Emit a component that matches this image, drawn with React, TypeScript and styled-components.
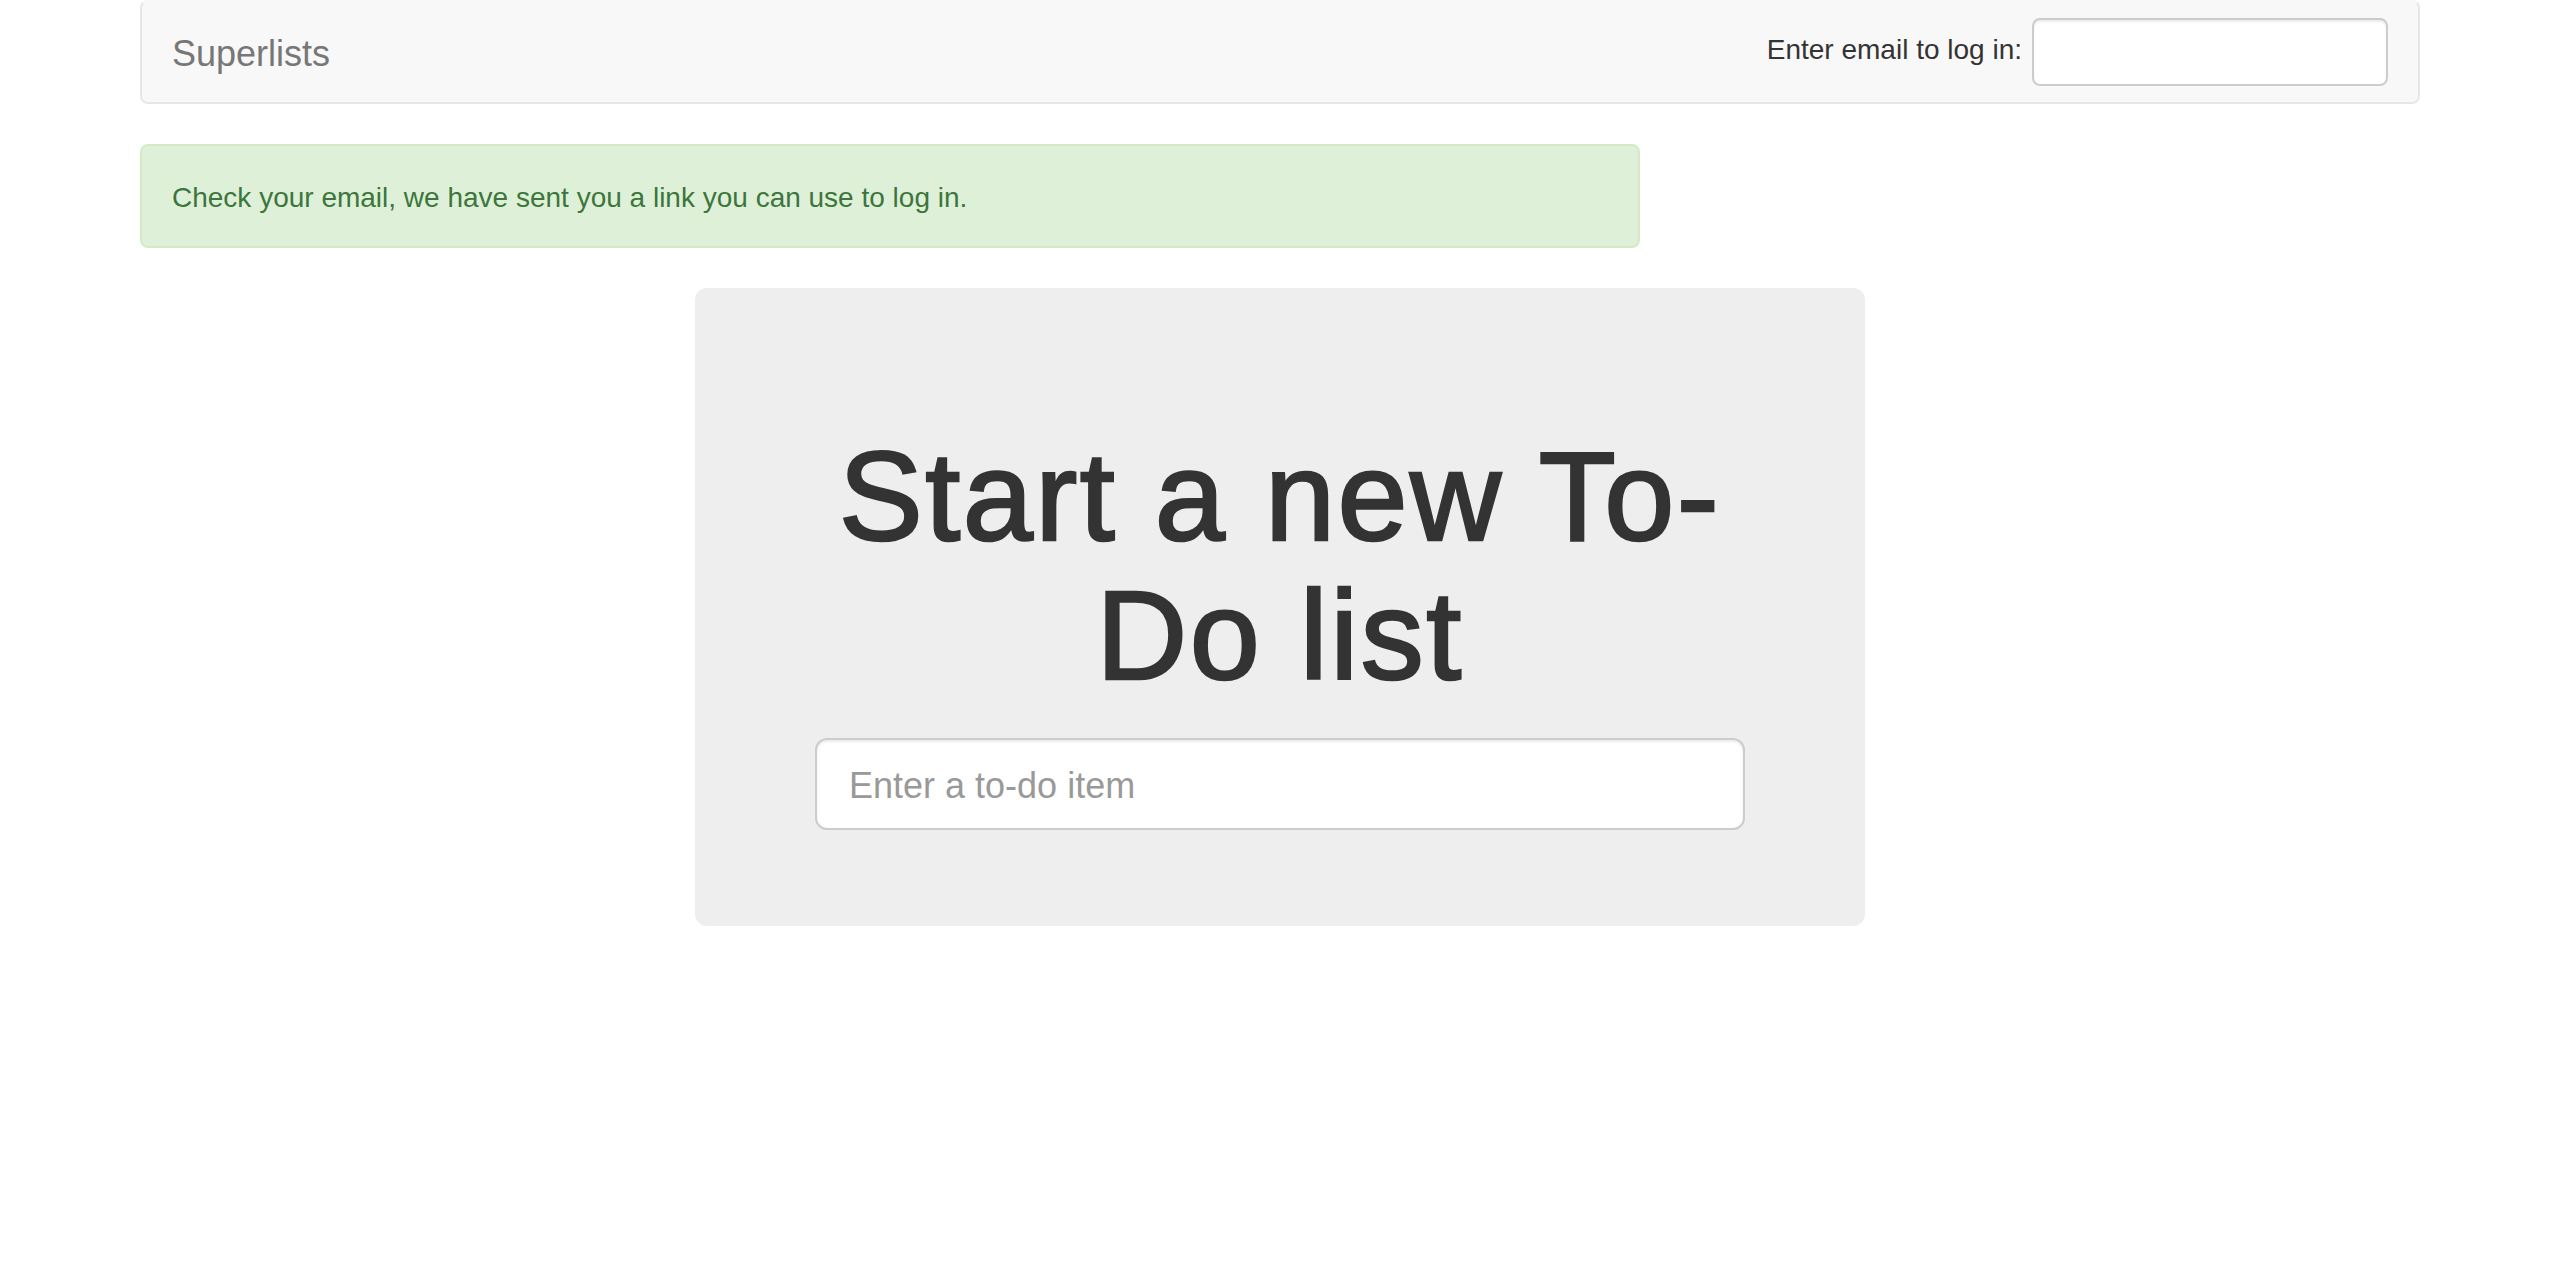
import React from "react";
import styled, { createGlobalStyle } from "styled-components";

const GlobalStyle = createGlobalStyle`
  html, body {
    margin: 0;
    padding: 0;
    background: #ffffff;
  }
  body {
    font-family: "Liberation Sans", Arial, Helvetica, sans-serif;
    font-size: 28px;
    line-height: 40px;
    color: #333333;
  }
  * { box-sizing: border-box; }
`;

const Container = styled.div`
  width: 2340px;
  margin: 0 auto;
  padding: 0 30px;
`;

const Navbar = styled.nav`
  display: flex;
  align-items: flex-start;
  justify-content: space-between;
  min-height: 100px;
  margin-bottom: 40px;
  background: #f8f8f8;
  border: 2px solid #e7e7e7;
  border-top-color: transparent;
  border-radius: 8px;
  padding: 0 30px;
`;

const Brand = styled.a`
  display: block;
  height: 100px;
  padding: 32px 0 28px;
  font-size: 36px;
  line-height: 40px;
  color: #777777;
  text-decoration: none;
`;

const NavForm = styled.form`
  display: flex;
  align-items: center;
  gap: 10px;
  margin: 16px 0 0;
  padding: 0;
`;

const NavLabel = styled.span`
  font-size: 28px;
  line-height: 40px;
  color: #333333;
  margin-top: -4px;
`;

const TextInput = styled.input<{ $large?: boolean }>`
  display: block;
  width: ${(p) => (p.$large ? "100%" : "356px")};
  height: ${(p) => (p.$large ? "92px" : "68px")};
  padding: ${(p) => (p.$large ? "22px 32px 18px" : "12px 24px")};
  font-family: inherit;
  font-size: ${(p) => (p.$large ? "36px" : "28px")};
  line-height: ${(p) => (p.$large ? "1.33" : "40px")};
  color: #555555;
  background: #ffffff;
  border: 2px solid #cccccc;
  border-radius: ${(p) => (p.$large ? "12px" : "8px")};
  box-shadow: inset 0 2px 2px rgba(0, 0, 0, 0.075);
  outline: none;
  &::placeholder {
    color: #999999;
  }
`;

const Row = styled.div`
  display: flex;
  margin: 0 -30px;
`;

const Col = styled.div<{ $span: number; $offset?: number }>`
  width: ${(p) => (p.$span / 12) * 100}%;
  margin-left: ${(p) => ((p.$offset || 0) / 12) * 100}%;
  padding: 0 30px;
`;

const Alert = styled.div`
  padding: 32px 30px 28px;
  margin-bottom: 40px;
  border: 2px solid #d6e9c6;
  border-radius: 8px;
  background: #dff0d8;
  color: #3c763d;
  font-size: 28px;
  line-height: 40px;
`;

const Jumbotron = styled.div`
  width: 50%;
  margin-left: 25%;
  padding: 96px 120px;
  margin-bottom: 60px;
  background: #eeeeee;
  border-radius: 12px;
  text-align: center;
`;

const Heading = styled.h1`
  margin: 44px 0 33px;
  font-size: 126px;
  line-height: 1.1;
  font-weight: 500;
  letter-spacing: 2.5px;
  color: #333333;
  -webkit-text-stroke: 2.5px #333333;
`;

export default function App() {
  return (
    <>
      <GlobalStyle />
      <Container>
        <Navbar role="navigation">
          <Brand href="#">Superlists</Brand>
          <NavForm onSubmit={(e) => e.preventDefault()}>
            <NavLabel>Enter email to log in:</NavLabel>
            <TextInput name="email" type="text" />
          </NavForm>
        </Navbar>
        <Row>
          <Col $span={8}>
            <Alert>Check your email, we have sent you a link you can use to log in.</Alert>
          </Col>
        </Row>
        <Row>
          <Jumbotron>
            <Heading>Start a new To-Do list</Heading>
            <form onSubmit={(e) => e.preventDefault()}>
              <TextInput $large name="item_text" placeholder="Enter a to-do item" />
            </form>
          </Jumbotron>
        </Row>
      </Container>
    </>
  );
}
